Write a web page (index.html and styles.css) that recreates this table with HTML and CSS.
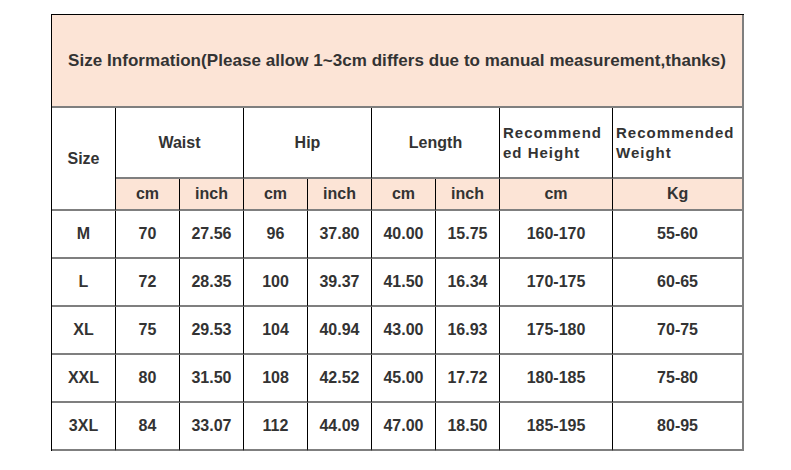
FILE: index.html
```html
<!DOCTYPE html>
<html>
<head>
<meta charset="utf-8">
<link rel="stylesheet" href="styles.css">
</head>
<body>
<table class="size-table">
  <colgroup>
    <col class="c64"><col class="c64"><col class="c64"><col class="c64"><col class="c64"><col class="c64"><col class="c64"><col class="c113"><col class="c131">
  </colgroup>
  <tr class="row-title">
    <td colspan="9" class="title">Size Information(Please allow 1~3cm differs due to manual measurement,thanks)</td>
  </tr>
  <tr class="row-head">
    <td rowspan="2" class="head">Size</td>
    <td colspan="2" class="head">Waist</td>
    <td colspan="2" class="head">Hip</td>
    <td colspan="2" class="head">Length</td>
    <td class="head rec">Recommend ed Height</td>
    <td class="head rec last">Recommended Weight</td>
  </tr>
  <tr class="row-sub">
    <td class="sub">cm</td><td class="sub">inch</td>
    <td class="sub">cm</td><td class="sub">inch</td>
    <td class="sub">cm</td><td class="sub">inch</td>
    <td class="sub">cm</td><td class="sub last">Kg</td>
  </tr>
  <tr class="row-data">
    <td>M</td><td>70</td><td>27.56</td><td>96</td><td>37.80</td><td>40.00</td><td>15.75</td><td>160-170</td><td class="last">55-60</td>
  </tr>
  <tr class="row-data">
    <td>L</td><td>72</td><td>28.35</td><td>100</td><td>39.37</td><td>41.50</td><td>16.34</td><td>170-175</td><td class="last">60-65</td>
  </tr>
  <tr class="row-data">
    <td>XL</td><td>75</td><td>29.53</td><td>104</td><td>40.94</td><td>43.00</td><td>16.93</td><td>175-180</td><td class="last">70-75</td>
  </tr>
  <tr class="row-data">
    <td>XXL</td><td>80</td><td>31.50</td><td>108</td><td>42.52</td><td>45.00</td><td>17.72</td><td>180-185</td><td class="last">75-80</td>
  </tr>
  <tr class="row-data">
    <td>3XL</td><td>84</td><td>33.07</td><td>112</td><td>44.09</td><td>47.00</td><td>18.50</td><td>185-195</td><td class="last">80-95</td>
  </tr>
</table>
</body>
</html>
```

FILE: styles.css
```css
html, body {
  margin: 0;
  padding: 0;
  background: #ffffff;
}

body {
  padding: 14px 0 0 51px;
  font-family: "Liberation Sans", Arial, sans-serif;
  color: #333333;
}

.size-table {
  border-collapse: separate;
  border-spacing: 0;
  table-layout: fixed;
  width: 693px;
  border-top: 1px solid #000000;
  border-left: 1px solid #000000;
}

.c64 { width: 64px; }
.c113 { width: 113px; }
.c131 { width: 131px; }

.size-table td {
  padding: 0;
  border-right: 1px solid #000000;
  border-bottom: 2px solid #7f7f7f;
  text-align: center;
  vertical-align: middle;
  font-weight: bold;
  font-size: 16px;
  box-sizing: border-box;
}

.size-table td.last {
  border-right: 2px solid #7f7f7f;
}

.row-title { height: 93px; }
.row-head { height: 71px; }
.row-sub { height: 32px; }
.row-data { height: 48px; }

.size-table td.title {
  background: #fce4d6;
  font-size: 17px;
  letter-spacing: 0.05px;
  white-space: nowrap;
  border-right: 2px solid #7f7f7f;
}

.size-table td.sub {
  background: #fce4d6;
}

.size-table td.rec {
  text-align: left;
  font-size: 15px;
  letter-spacing: 1px;
  line-height: 20px;
  padding-left: 3px;
}
```
